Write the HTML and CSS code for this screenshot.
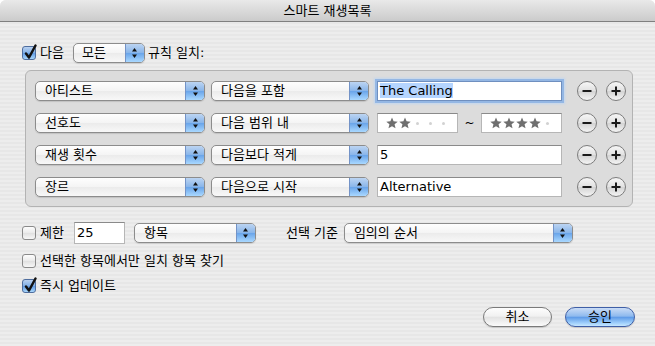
FILE: index.html
```html
<!DOCTYPE html>
<html lang="ko">
<head>
    <meta charset="UTF-8">
    <title>스마트 재생목록</title>
    <link rel="stylesheet" href="styles.css">
</head>
<body>
    <div class="window">
        <div class="titlebar">스마트 재생목록</div>

        <div class="content">
            <div class="match-row">
                <span class="checkbox checked"><svg class="check" viewBox="0 0 14 14"><path d="M3 6.5 L6 10.5 L12.5 -1.5"/></svg></span>
                <span class="label">다음</span>
                <div class="popup popup-all">
                    <span class="popup-label">모든</span>
                    <span class="popup-arrows"><svg width="7" height="12" viewBox="0 0 7 12"><polygon points="1,4.5 3.5,1 6,4.5"/><polygon points="1,7.5 6,7.5 3.5,11"/></svg></span>
                </div>
                <span class="label label-tight">규칙 일치:</span>
            </div>

            <div class="rules">
                <div class="rule">
                    <div class="popup rule-key">
                        <span class="popup-label">아티스트</span>
                        <span class="popup-arrows"><svg width="7" height="12" viewBox="0 0 7 12"><polygon points="1,4.5 3.5,1 6,4.5"/><polygon points="1,7.5 6,7.5 3.5,11"/></svg></span>
                    </div>
                    <div class="popup rule-op">
                        <span class="popup-label">다음을 포함</span>
                        <span class="popup-arrows"><svg width="7" height="12" viewBox="0 0 7 12"><polygon points="1,4.5 3.5,1 6,4.5"/><polygon points="1,7.5 6,7.5 3.5,11"/></svg></span>
                    </div>
                    <div class="field rule-value focused"><span class="selected">The Calling</span></div>
                    <div class="round-btn minus"><svg width="10" height="10" viewBox="0 0 10 10"><line x1="0.5" y1="5" x2="9.5" y2="5"/></svg></div>
                    <div class="round-btn plus"><svg width="10" height="10" viewBox="0 0 10 10"><line x1="0.5" y1="5" x2="9.5" y2="5"/><line x1="5" y1="0.5" x2="5" y2="9.5"/></svg></div>
                </div>

                <div class="rule">
                    <div class="popup rule-key">
                        <span class="popup-label">선호도</span>
                        <span class="popup-arrows"><svg width="7" height="12" viewBox="0 0 7 12"><polygon points="1,4.5 3.5,1 6,4.5"/><polygon points="1,7.5 6,7.5 3.5,11"/></svg></span>
                    </div>
                    <div class="popup rule-op">
                        <span class="popup-label">다음 범위 내</span>
                        <span class="popup-arrows"><svg width="7" height="12" viewBox="0 0 7 12"><polygon points="1,4.5 3.5,1 6,4.5"/><polygon points="1,7.5 6,7.5 3.5,11"/></svg></span>
                    </div>
                    <div class="rating-range">
                        <div class="field rating">
                            <span class="star"><svg width="12" height="12" viewBox="0 0 12 12"><polygon points="6,0.5 7.59,4.32 11.71,4.65 8.57,7.33 9.53,11.35 6,9.2 2.47,11.35 3.43,7.33 0.29,4.65 4.41,4.32"/></svg></span>
                            <span class="star"><svg width="12" height="12" viewBox="0 0 12 12"><polygon points="6,0.5 7.59,4.32 11.71,4.65 8.57,7.33 9.53,11.35 6,9.2 2.47,11.35 3.43,7.33 0.29,4.65 4.41,4.32"/></svg></span>
                            <span class="star"><i class="dot"></i></span>
                            <span class="star"><i class="dot"></i></span>
                            <span class="star"><i class="dot"></i></span>
                        </div>
                        <span class="tilde">~</span>
                        <div class="field rating">
                            <span class="star"><svg width="12" height="12" viewBox="0 0 12 12"><polygon points="6,0.5 7.59,4.32 11.71,4.65 8.57,7.33 9.53,11.35 6,9.2 2.47,11.35 3.43,7.33 0.29,4.65 4.41,4.32"/></svg></span>
                            <span class="star"><svg width="12" height="12" viewBox="0 0 12 12"><polygon points="6,0.5 7.59,4.32 11.71,4.65 8.57,7.33 9.53,11.35 6,9.2 2.47,11.35 3.43,7.33 0.29,4.65 4.41,4.32"/></svg></span>
                            <span class="star"><svg width="12" height="12" viewBox="0 0 12 12"><polygon points="6,0.5 7.59,4.32 11.71,4.65 8.57,7.33 9.53,11.35 6,9.2 2.47,11.35 3.43,7.33 0.29,4.65 4.41,4.32"/></svg></span>
                            <span class="star"><svg width="12" height="12" viewBox="0 0 12 12"><polygon points="6,0.5 7.59,4.32 11.71,4.65 8.57,7.33 9.53,11.35 6,9.2 2.47,11.35 3.43,7.33 0.29,4.65 4.41,4.32"/></svg></span>
                            <span class="star"><i class="dot"></i></span>
                        </div>
                    </div>
                    <div class="round-btn minus"><svg width="10" height="10" viewBox="0 0 10 10"><line x1="0.5" y1="5" x2="9.5" y2="5"/></svg></div>
                    <div class="round-btn plus"><svg width="10" height="10" viewBox="0 0 10 10"><line x1="0.5" y1="5" x2="9.5" y2="5"/><line x1="5" y1="0.5" x2="5" y2="9.5"/></svg></div>
                </div>

                <div class="rule">
                    <div class="popup rule-key">
                        <span class="popup-label">재생 횟수</span>
                        <span class="popup-arrows"><svg width="7" height="12" viewBox="0 0 7 12"><polygon points="1,4.5 3.5,1 6,4.5"/><polygon points="1,7.5 6,7.5 3.5,11"/></svg></span>
                    </div>
                    <div class="popup rule-op">
                        <span class="popup-label">다음보다 적게</span>
                        <span class="popup-arrows"><svg width="7" height="12" viewBox="0 0 7 12"><polygon points="1,4.5 3.5,1 6,4.5"/><polygon points="1,7.5 6,7.5 3.5,11"/></svg></span>
                    </div>
                    <div class="field rule-value">5</div>
                    <div class="round-btn minus"><svg width="10" height="10" viewBox="0 0 10 10"><line x1="0.5" y1="5" x2="9.5" y2="5"/></svg></div>
                    <div class="round-btn plus"><svg width="10" height="10" viewBox="0 0 10 10"><line x1="0.5" y1="5" x2="9.5" y2="5"/><line x1="5" y1="0.5" x2="5" y2="9.5"/></svg></div>
                </div>

                <div class="rule">
                    <div class="popup rule-key">
                        <span class="popup-label">장르</span>
                        <span class="popup-arrows"><svg width="7" height="12" viewBox="0 0 7 12"><polygon points="1,4.5 3.5,1 6,4.5"/><polygon points="1,7.5 6,7.5 3.5,11"/></svg></span>
                    </div>
                    <div class="popup rule-op">
                        <span class="popup-label">다음으로 시작</span>
                        <span class="popup-arrows"><svg width="7" height="12" viewBox="0 0 7 12"><polygon points="1,4.5 3.5,1 6,4.5"/><polygon points="1,7.5 6,7.5 3.5,11"/></svg></span>
                    </div>
                    <div class="field rule-value">Alternative</div>
                    <div class="round-btn minus"><svg width="10" height="10" viewBox="0 0 10 10"><line x1="0.5" y1="5" x2="9.5" y2="5"/></svg></div>
                    <div class="round-btn plus"><svg width="10" height="10" viewBox="0 0 10 10"><line x1="0.5" y1="5" x2="9.5" y2="5"/><line x1="5" y1="0.5" x2="5" y2="9.5"/></svg></div>
                </div>
            </div>

            <div class="limit-row">
                <span class="checkbox"></span>
                <span class="label">제한</span>
                <div class="field limit-count">25</div>
                <div class="popup limit-unit">
                    <span class="popup-label">항목</span>
                    <span class="popup-arrows"><svg width="7" height="12" viewBox="0 0 7 12"><polygon points="1,4.5 3.5,1 6,4.5"/><polygon points="1,7.5 6,7.5 3.5,11"/></svg></span>
                </div>
                <span class="label sort-label">선택 기준</span>
                <div class="popup sort-by">
                    <span class="popup-label">임의의 순서</span>
                    <span class="popup-arrows"><svg width="7" height="12" viewBox="0 0 7 12"><polygon points="1,4.5 3.5,1 6,4.5"/><polygon points="1,7.5 6,7.5 3.5,11"/></svg></span>
                </div>
            </div>

            <div class="option-row first">
                <span class="checkbox"></span>
                <span class="label">선택한 항목에서만 일치 항목 찾기</span>
            </div>
            <div class="option-row">
                <span class="checkbox checked"><svg class="check" viewBox="0 0 14 14"><path d="M3 6.5 L6 10.5 L12.5 -1.5"/></svg></span>
                <span class="label">즉시 업데이트</span>
            </div>

            <div class="button-row">
                <button class="push">취소</button>
                <button class="push default">승인</button>
            </div>
        </div>
    </div>
</body>
</html>
```

FILE: styles.css
```css
* {
    margin: 0;
    padding: 0;
    box-sizing: border-box;
    font-family: "DejaVu Sans", "Noto Sans CJK KR", sans-serif;
}

body {
    background: #fff;
}

.window {
    width: 655px;
    height: 346px;
    border-radius: 6px 6px 0 0;
    overflow: hidden;
    background: repeating-linear-gradient(#ededed 0 2px, #e7e7e7 2px 4px);
    color: #000;
    font-size: 13px;
}

.titlebar {
    height: 22px;
    border-bottom: 1px solid #7f7f7f;
    background: linear-gradient(#e9e9e9, #cbcbcb);
    text-align: center;
    font-size: 13px;
    line-height: 21px;
}

.content {
    padding: 0 20px 0 22px;
}

.label {
    margin-left: 4px;
    line-height: 16px;
    white-space: nowrap;
}

.label-tight {
    margin-left: 3px;
}

/* checkboxes */
.checkbox {
    position: relative;
    display: inline-block;
    flex: none;
    width: 14px;
    height: 14px;
    border: 1px solid #8a8a8a;
    border-radius: 3px;
    background: linear-gradient(#fdfdfd, #eaeaea 50%, #e0e0e0 51%, #f7f7f7);
}

.checkbox.checked {
    border-color: #4e6d9e;
    background: linear-gradient(#b9d1f0, #7faee6 50%, #5f9ae4 51%, #a8d6fb);
}

.check {
    position: absolute;
    left: 0;
    top: 0;
    width: 14px;
    height: 14px;
    overflow: visible;
}

.check path {
    fill: none;
    stroke: #111;
    stroke-width: 2.5;
    stroke-linecap: round;
    stroke-linejoin: round;
}

/* popup buttons */
.popup {
    display: flex;
    flex: none;
    height: 20px;
    border: 1px solid #8c8c8c;
    border-radius: 5px;
    overflow: hidden;
    background: linear-gradient(#fefefe, #f4f4f4 50%, #ebebeb 51%, #f8f8f8);
    box-shadow: 0 1px 1px rgba(0,0,0,0.12);
}

.popup-label {
    flex: 1;
    padding-left: 9px;
    line-height: 18px;
    white-space: nowrap;
}

.popup-arrows {
    width: 19px;
    display: flex;
    align-items: center;
    justify-content: center;
    border-left: 1px solid #7393c7;
    background: linear-gradient(#bcd4f2, #8ab6ea 48%, #6aa5ea 52%, #a9d8ff);
}

.popup-arrows polygon {
    fill: #111;
}

.match-row {
    display: flex;
    align-items: center;
    height: 20px;
    margin-top: 21px;
}

.popup-all {
    width: 72px;
    margin-left: 9px;
}

.popup-all .popup-label {
    padding-left: 8px;
}

/* rules box */
.rules {
    margin: 7px 2px 0 3px;
    padding: 10px 6px 9px 9px;
    border: 1px solid #b3b3b3;
    border-radius: 6px;
    background: #dcdcdc;
    display: flex;
    flex-direction: column;
    gap: 12px;
}

.rule {
    display: flex;
    align-items: center;
    height: 20px;
}

.rule-key {
    width: 170px;
}

.rule-op {
    width: 158px;
    margin-left: 6px;
}

.field {
    height: 20px;
    flex: none;
    border: 1px solid #b6b6b6;
    border-top-color: #8a8a8a;
    background: #fff;
    padding: 0 2px;
    line-height: 18px;
    white-space: nowrap;
}

.rule-value {
    width: 185px;
    margin-left: 8px;
}

.focused {
    border-color: #6f8fbf;
    box-shadow: 0 0 0 2px #94b7e4, 0 0 2px 3px #c2d6ef;
}

.selected {
    background: #b5d5ff;
}

.rating-range {
    display: flex;
    align-items: center;
    width: 185px;
    margin-left: 8px;
}

.rating {
    width: 81px;
    display: flex;
    align-items: center;
    padding-left: 7px;
}

.star {
    width: 13px;
    height: 18px;
    display: flex;
    align-items: center;
    justify-content: center;
}

.star polygon {
    fill: #6f6f6f;
}

.dot {
    width: 3px;
    height: 3px;
    border-radius: 50%;
    background: #d2d2d2;
}

.tilde {
    flex: 1;
    text-align: center;
    line-height: 18px;
    font-size: 12px;
}

.round-btn {
    flex: none;
    width: 20px;
    height: 20px;
    border: 1px solid #7d7d7d;
    border-radius: 50%;
    background: linear-gradient(#f6f6f6, #e1e1e1 50%, #d3d3d3 51%, #f4f4f4);
    display: flex;
    align-items: center;
    justify-content: center;
}

.round-btn line {
    stroke: #1a1a1a;
    stroke-width: 2;
}

.minus {
    margin-left: 15px;
}

.plus {
    margin-left: 9px;
}

/* bottom options */
.limit-row {
    display: flex;
    align-items: center;
    height: 22px;
    margin-top: 15px;
}

.limit-count {
    width: 51px;
    height: 22px;
    margin-left: 10px;
    line-height: 20px;
}

.limit-unit {
    width: 122px;
    margin-left: 9px;
}

.sort-label {
    margin-left: 30px;
}

.sort-by {
    width: 229px;
    margin-left: 6px;
}

.option-row {
    display: flex;
    align-items: center;
    height: 18px;
    margin-top: 7px;
}

.option-row.first {
    margin-top: 8px;
}

.button-row {
    display: flex;
    justify-content: flex-end;
    gap: 13px;
    margin-top: 12px;
}

.push {
    width: 69px;
    height: 20px;
    border: 1px solid #7a7a7a;
    border-radius: 10px;
    font-size: 13px;
    line-height: 18px;
    background: linear-gradient(#fdfdfd, #f1f1f1 45%, #e3e3e3 52%, #fbfbfb);
    box-shadow: 0 1px 1px rgba(0,0,0,0.15);
}

.push.default {
    width: 70px;
    border-color: #3f5fa6;
    background: linear-gradient(#cadcf6, #8fbaee 45%, #609ce8 52%, #a3d2fc 85%, #c6e7ff);
}
```
